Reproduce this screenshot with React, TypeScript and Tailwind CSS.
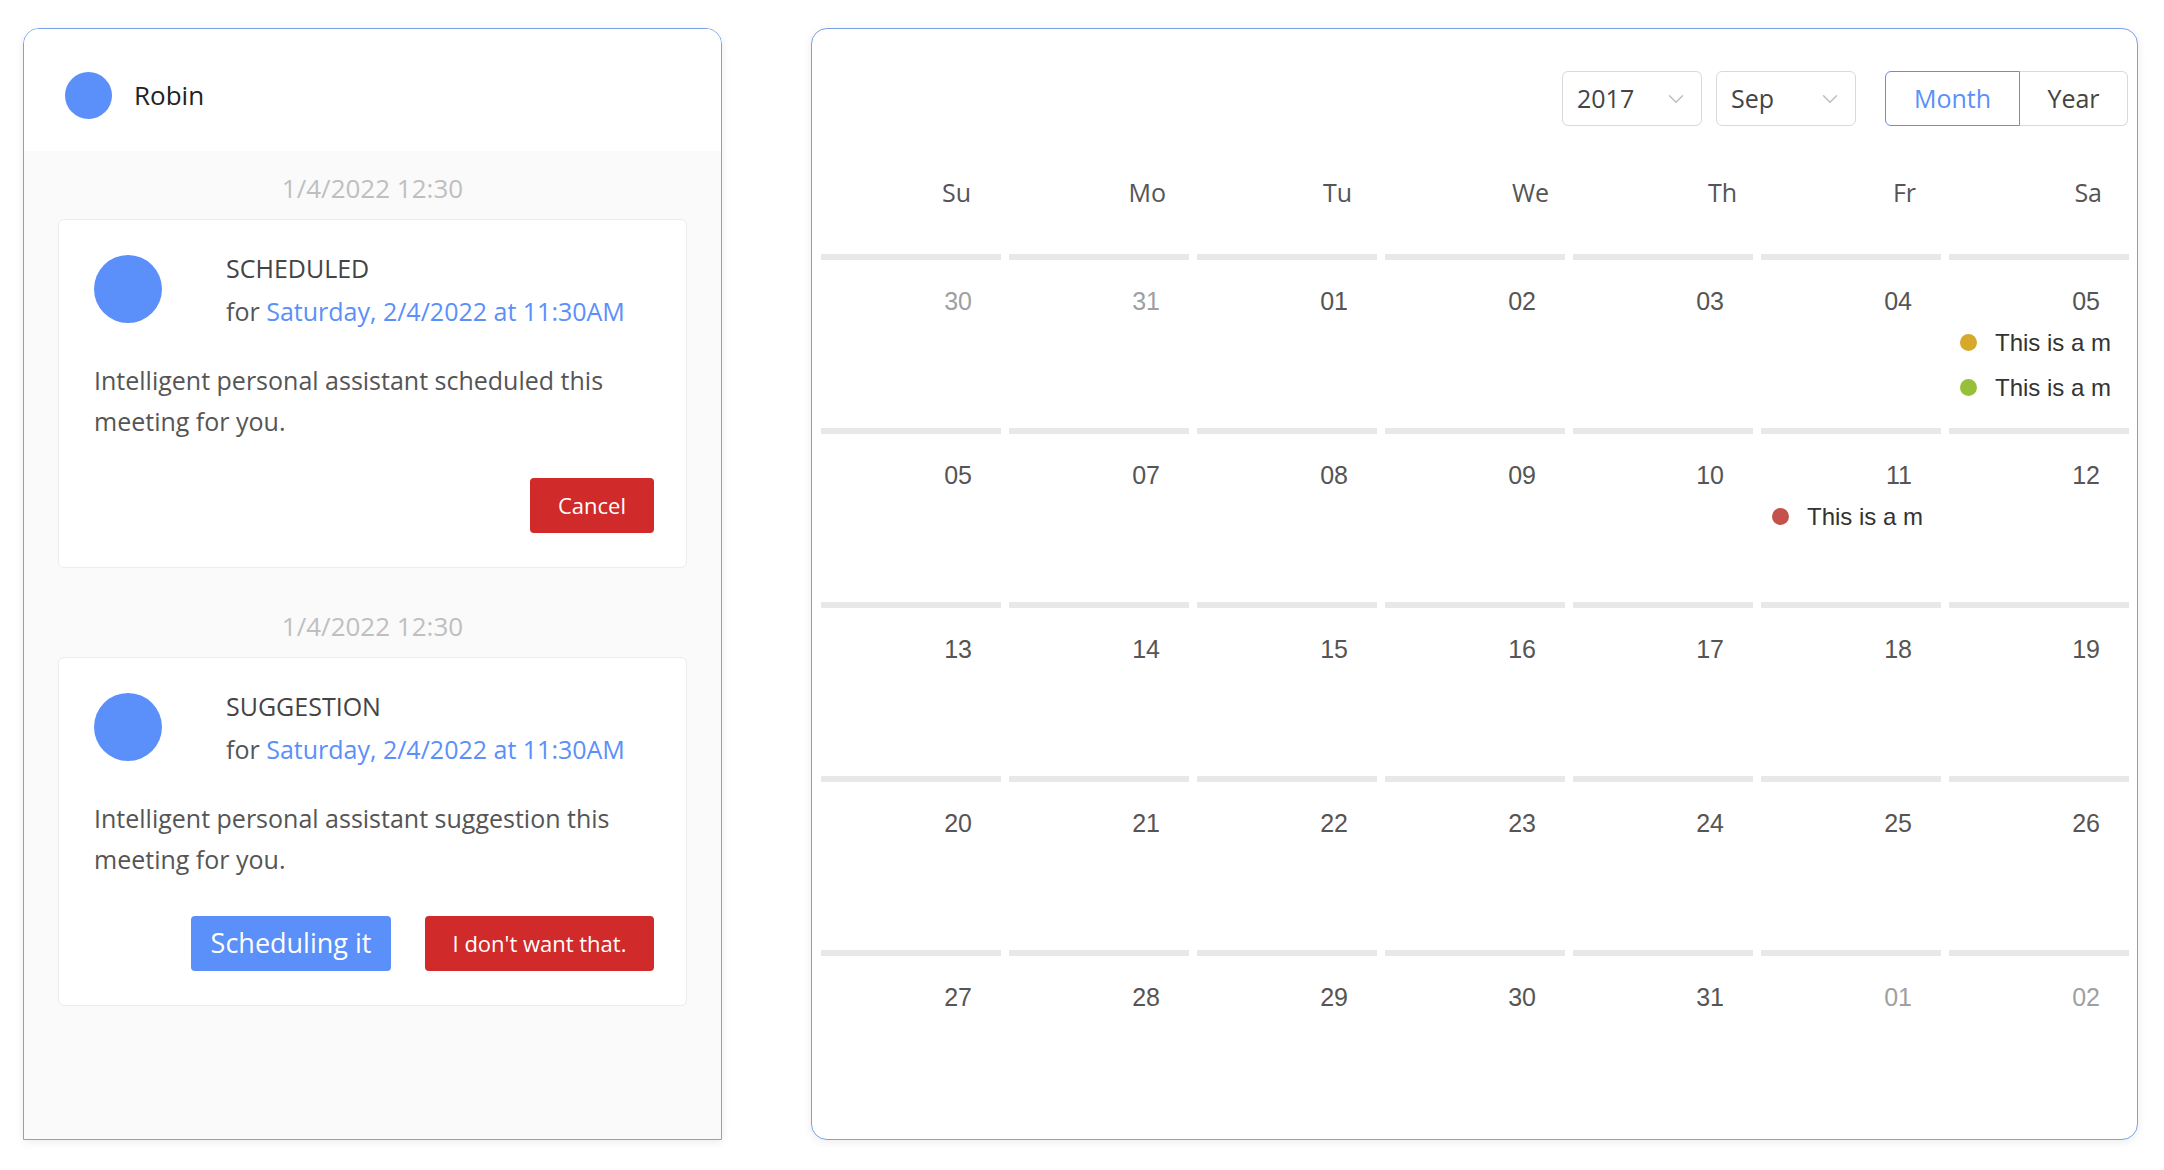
import { ChevronDown } from "lucide-react";

const uiFont = "font-['Open_Sans','Noto_Sans',sans-serif]";
const calFont = "font-['Liberation_Sans',Arial,sans-serif]";

type Ev = { color: string; text: string };
type Day = { n: string; muted?: boolean; events?: Ev[] };

const weeks: Day[][] = [
  [
    { n: "30", muted: true },
    { n: "31", muted: true },
    { n: "01" },
    { n: "02" },
    { n: "03" },
    { n: "04" },
    {
      n: "05",
      events: [
        { color: "bg-[#d6a92b]", text: "This is a m" },
        { color: "bg-[#97c03a]", text: "This is a m" },
      ],
    },
  ],
  [
    { n: "05" },
    { n: "07" },
    { n: "08" },
    { n: "09" },
    { n: "10" },
    { n: "11", events: [{ color: "bg-[#c5524a]", text: "This is a m" }] },
    { n: "12" },
  ],
  ["13", "14", "15", "16", "17", "18", "19"].map((n) => ({ n })),
  ["20", "21", "22", "23", "24", "25", "26"].map((n) => ({ n })),
  [
    { n: "27" },
    { n: "28" },
    { n: "29" },
    { n: "30" },
    { n: "31" },
    { n: "01", muted: true },
    { n: "02", muted: true },
  ],
];

// weekday labels sit a little unevenly in the original, so each gets its own right padding
const weekdays = [
  { d: "Su", pad: "pr-[34px]" },
  { d: "Mo", pad: "pr-[27px]" },
  { d: "Tu", pad: "pr-[29px]" },
  { d: "We", pad: "pr-[20px]" },
  { d: "Th", pad: "pr-[20px]" },
  { d: "Fr", pad: "pr-[29px]" },
  { d: "Sa", pad: "pr-[31px]" },
];

const Timestamp = ({ className = "" }: { className?: string }) => (
  <div className={`text-center text-[26px] leading-[36px] text-[#bfbfbf] mb-[13px] ${className}`}>
    1/4/2022 12:30
  </div>
);

const MessageCard = ({
  title,
  body,
  children,
}: {
  title: string;
  body: string;
  children: React.ReactNode;
}) => (
  <div className="bg-white border border-[#ececec] rounded-[6px] pl-[35px] pr-[32px] pt-[31px] pb-[34px]">
    <div className="flex">
      <div className="w-[68px] h-[68px] rounded-full bg-[#5b8ff9] mt-[4px] shrink-0" />
      <div className="ml-[64px] text-[25px] leading-[40px]">
        <div className="text-[#444] -mt-[3px] mb-[3px]">{title}</div>
        <div className="text-[#555]">
          for <span className="text-[#5b8ff9]">Saturday, 2/4/2022 at 11:30AM</span>
        </div>
      </div>
    </div>
    <p className="mt-[29px] text-[25px] leading-[41px] text-[#555] pr-[30px]">{body}</p>
    <div className="mt-[36px] flex justify-end gap-[34px]">{children}</div>
  </div>
);

const ChatPanel = () => (
  <div
    className={`w-[699px] h-[1112px] border border-[#7aa2e8] rounded-t-[16px] shadow-[0_2px_10px_rgba(0,0,0,0.08)] overflow-hidden flex flex-col ${uiFont}`}
  >
    <div className="h-[122px] bg-white flex items-center pl-[41px] pt-[10px] shrink-0">
      <div className="w-[47px] h-[47px] rounded-full bg-[#5b8ff9]" />
      <span className="ml-[22px] text-[26px] text-[#222]">Robin</span>
    </div>
    <div className="flex-1 bg-[#fafafa] px-[34px] pt-[19px]">
      <Timestamp />
      <MessageCard
        title="SCHEDULED"
        body="Intelligent personal assistant scheduled this meeting for you."
      >
        <button className="w-[124px] h-[55px] rounded-[4px] bg-[#d02a2a] text-white text-[22px]">
          Cancel
        </button>
      </MessageCard>
      <Timestamp className="mt-[40px]" />
      <MessageCard
        title="SUGGESTION"
        body="Intelligent personal assistant suggestion this meeting for you."
      >
        <button className="w-[200px] h-[55px] rounded-[4px] bg-[#5b8ff9] text-white text-[27px]">
          Scheduling it
        </button>
        <button className="w-[229px] h-[55px] rounded-[4px] bg-[#d02a2a] text-white text-[22px]">
          I don't want that.
        </button>
      </MessageCard>
    </div>
  </div>
);

const Select = ({ value }: { value: string }) => (
  <div className="w-[140px] h-[55px] border border-[#d9d9d9] rounded-[6px] bg-white flex items-center justify-between pl-[14px] pr-[12px]">
    <span className="text-[25px] text-[#444]">{value}</span>
    <ChevronDown size={26} strokeWidth={1.4} className="text-[#bfbfbf]" />
  </div>
);

const CalendarPanel = () => (
  <div className="w-[1327px] h-[1112px] border border-[#7aa2e8] rounded-[16px] shadow-[0_2px_10px_rgba(0,0,0,0.08)] bg-white overflow-hidden">
    <div className={`flex justify-end items-center mt-[42px] pr-[9px] ${uiFont}`}>
      <Select value="2017" />
      <div className="ml-[14px]">
        <Select value="Sep" />
      </div>
      <div className="ml-[29px] flex">
        <button className="w-[135px] h-[55px] border border-[#5b8ff9] rounded-l-[6px] text-[25px] text-[#5b8ff9] bg-white">
          Month
        </button>
        <button className="w-[108px] h-[55px] border border-l-0 border-[#d9d9d9] rounded-r-[6px] text-[25px] text-[#444] bg-white">
          Year
        </button>
      </div>
    </div>

    <div className="pl-[5px]">
      <div className={`grid grid-cols-7 w-[1316px] mt-[48px] mb-[44px] ${uiFont}`}>
        {weekdays.map(({ d, pad }) => (
          <div key={d} className={`text-right text-[25px] leading-[36px] text-[#555] ${pad}`}>
            {d}
          </div>
        ))}
      </div>

      <div className={`w-[1316px] ${calFont}`}>
        {weeks.map((week, wi) => (
          <div key={wi} className="grid grid-cols-7 h-[174px]">
            {week.map((day, di) => (
              <div key={di} className="px-[4px]">
                <div className="h-[6px] bg-[#e8e8e8]" />
                <div
                  className={`mt-[27px] text-right pr-[29px] text-[25px] leading-[28px] ${
                    day.muted ? "text-[#a0a0a0]" : "text-[#555]"
                  }`}
                >
                  {day.n}
                </div>
                {day.events && (
                  <div className="mt-[5px]">
                    {day.events.map((ev, ei) => (
                      <div key={ei} className="flex items-center h-[45px] pl-[11px]">
                        <span className={`w-[17px] h-[17px] rounded-full shrink-0 ${ev.color}`} />
                        <span className="ml-[18px] text-[24px] text-[#333] whitespace-nowrap">
                          {ev.text}
                        </span>
                      </div>
                    ))}
                  </div>
                )}
              </div>
            ))}
          </div>
        ))}
      </div>
    </div>
  </div>
);

export default function App() {
  return (
    <div className="w-[2164px] h-[1170px] bg-white flex items-start pt-[28px] pl-[23px] gap-[89px]">
      <ChatPanel />
      <CalendarPanel />
    </div>
  );
}
